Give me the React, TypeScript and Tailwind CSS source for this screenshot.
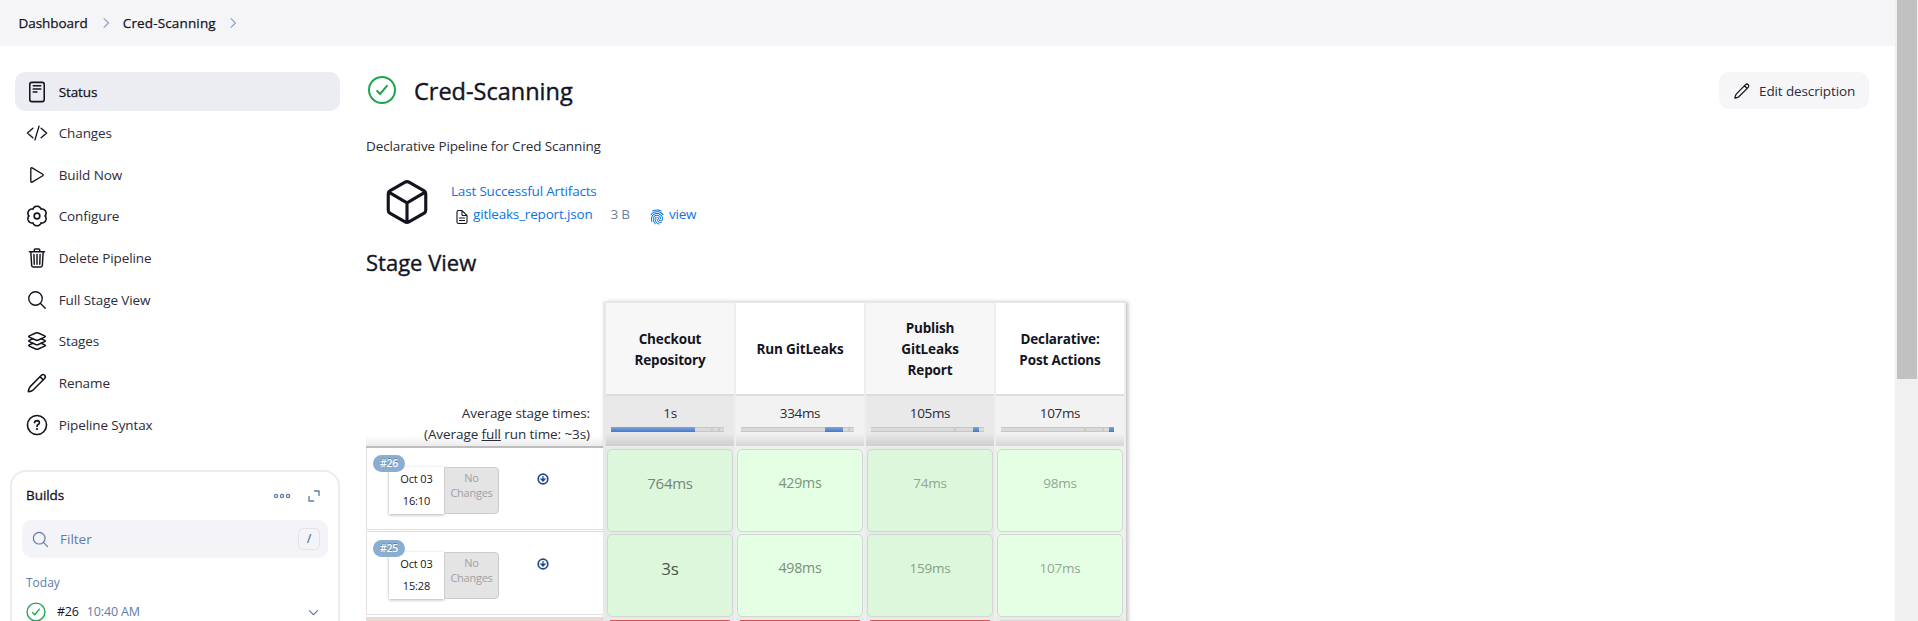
import React from "react";
import { IoFingerPrint } from "react-icons/io5";

const stroke = {
  fill: "none",
  stroke: "currentColor",
  strokeLinecap: "round" as const,
  strokeLinejoin: "round" as const,
};

type IconProps = { size?: number; className?: string };

function Icon({ size = 22, className = "", width = 32, children }: IconProps & { width?: number; children: React.ReactNode }) {
  return (
    <svg width={size} height={size} viewBox="0 0 512 512" className={"shrink-0 " + className} {...stroke} strokeWidth={width}>
      {children}
    </svg>
  );
}

const StatusIcon = () => (
  <Icon width={36}>
    <rect x="88" y="32" width="336" height="448" rx="48" />
    <path d="M168 112h176M168 184h176M168 256h88" />
  </Icon>
);
const CodeIcon = () => (
  <Icon>
    <path d="M160 368L32 256l128-112M352 368l128-112-128-112M304 96l-96 320" />
  </Icon>
);
const PlayIcon = () => (
  <Icon>
    <path d="M112 111v290c0 17.44 17 28.52 31 20.16l247.900-148.370c12.120-7.250 12.120-26.330 0-33.580L143 90.840c-14-8.360-31 2.720-31 20.160z" />
  </Icon>
);

// Six-lobed cog outline, sampled around the circle with a lobe pointing up.
const gearPoints = Array.from({ length: 120 }, (_, i) => {
  const a = (i / 120) * Math.PI * 2;
  const r = 186 + 42 * Math.pow(Math.abs(Math.cos(3 * a)), 0.8);
  return `${(256 + r * Math.sin(a)).toFixed(1)},${(256 - r * Math.cos(a)).toFixed(1)}`;
}).join(" ");

const GearIcon = () => (
  <Icon width={38}>
    <circle cx="256" cy="256" r="66" />
    <polygon points={gearPoints} />
  </Icon>
);
const TrashIcon = () => (
  <Icon width={34}>
    <path d="M112 112l20 320c.95 18.490 14.400 32 32 32h184c17.670 0 30.870-13.510 32-32l20-320M80 112h352M192 112V72a24 24 0 0124-24h80a24 24 0 0124 24v40M256 176v224M184 176l8 224M328 176l-8 224" />
  </Icon>
);
const SearchIcon = ({ size, className }: IconProps) => (
  <Icon size={size} className={className}>
    <circle cx="221" cy="221" r="157" />
    <path d="M338.290 338.290L448 448" />
  </Icon>
);
const LayersIcon = () => (
  <Icon width={36}>
    <path d="M434.800 137.650l-149.360-68.100c-16.190-7.400-42.690-7.400-58.880 0L77.300 137.650c-17.600 8-17.600 21.090 0 29.090l148 67.500c16.890 7.700 44.690 7.700 61.580 0l148-67.500c17.520-8 17.520-21.100-.08-29.090zM160 308.520l-82.700 37.110c-17.600 8-17.600 21.100 0 29.100l148 67.500c16.890 7.690 44.690 7.690 61.580 0l148-67.500c17.600-8 17.600-21.100 0-29.100l-79.940-38.470" />
    <path d="M160 204.480l-82.800 37.160c-17.600 8-17.600 21.100 0 29.100l148 67.490c16.890 7.700 44.690 7.700 61.580 0l148-67.490c17.700-8 17.700-21.100.1-29.100L352 204.480" />
  </Icon>
);
const PencilIcon = ({ size, className }: IconProps) => (
  <Icon size={size} className={className} width={36}>
    <path d="M54 458Q62 390 92 346L358 76Q396 40 432 76Q470 114 432 152L166 420Q122 450 54 458zM326 108l78 78" />
  </Icon>
);
const HelpIcon = () => (
  <Icon width={38}>
    <circle cx="256" cy="256" r="222" />
    <path d="M200 202Q204 154 258 154Q312 156 312 202Q312 230 282 246Q256 260 256 292" />
    <circle cx="256" cy="352" r="8" />
  </Icon>
);
const CheckIcon = ({ size, className }: IconProps) => (
  <Icon size={size} className={className}>
    <circle cx="256" cy="256" r="208" />
    <path d="M336 190L224 320l-46-50" />
  </Icon>
);
const Chevron = ({ size = 14, className }: IconProps) => (
  <Icon size={size} className={className} width={44}>
    <path d="M184 96l160 160-160 160" />
  </Icon>
);
const CubeIcon = () => (
  <Icon size={50} width={32}>
    <path d="M448 341.370V170.610A32 32 0 00432.110 143l-152-88.460a47.940 47.940 0 00-48.240 0L79.890 143A32 32 0 0064 170.610v170.760A32 32 0 0079.890 369l152 88.460a48 48 0 0048.240 0l152-88.460A32 32 0 00448 341.370zM69 153.990l187 110 187-110M256 463.990v-200" />
  </Icon>
);
const FileIcon = () => (
  <Icon size={16} width={36}>
    <path d="M416 221.250V416a48 48 0 01-48 48H144a48 48 0 01-48-48V96a48 48 0 0148-48h98.750a32 32 0 0122.620 9.370l141.260 141.260a32 32 0 019.370 22.620zM256 56v120a32 32 0 0032 32h120M176 288h160M176 368h160" />
  </Icon>
);

const navItems = [
  { label: "Status", icon: <StatusIcon />, active: true },
  { label: "Changes", icon: <CodeIcon /> },
  { label: "Build Now", icon: <PlayIcon /> },
  { label: "Configure", icon: <GearIcon /> },
  { label: "Delete Pipeline", icon: <TrashIcon /> },
  { label: "Full Stage View", icon: <SearchIcon /> },
  { label: "Stages", icon: <LayersIcon /> },
  { label: "Rename", icon: <PencilIcon /> },
  { label: "Pipeline Syntax", icon: <HelpIcon /> },
];

function Sidebar() {
  return (
    <aside className="w-[366px] shrink-0">
      <nav className="flex flex-col gap-[2.670px] pt-[26px] pl-[15px]">
        {navItems.map((n) => (
          <a
            key={n.label}
            className={
              "flex h-[39px] w-[325px] items-center gap-[10.700px] rounded-[10px] pl-[11px] text-[13.500px] tracking-[-0.100px] whitespace-nowrap " +
              (n.active ? "bg-[#ecedf3] pt-px [-webkit-text-stroke:0.25px]" : "")
            }
          >
            {n.icon}
            <span className={n.active ? "" : "text-[#2c2c37]"}>{n.label}</span>
          </a>
        ))}
      </nav>
      <section className="mt-[26px] ml-[10px] h-[300px] w-[330px] rounded-[16px] border-2 border-[#ebebf3]">
        <div className="flex h-[48px] items-center pr-[17px] pl-[14px]">
          <h2 className="flex-1 pb-[2px] text-[13.500px] tracking-[-0.050px] [-webkit-text-stroke:0.3px]">Builds</h2>
          <svg width="18" height="6" className="mr-[16px] text-[#5c7da8]" {...stroke} strokeWidth="1.300">
            <circle cx="3" cy="3" r="1.600" />
            <circle cx="9" cy="3" r="1.600" />
            <circle cx="15" cy="3" r="1.600" />
          </svg>
          <svg width="14" height="14" className="text-[#5c7da8]" {...stroke} strokeWidth="1.400">
            <path d="M7.500 2h4.500v4.500M6.500 12H2V7.500" />
          </svg>
        </div>
        <div className="mx-[10px] flex h-[38px] items-center rounded-[10px] bg-[#f3f3f8] pr-[8px] pl-[9px] text-[#5c7da8]">
          <SearchIcon size={19} />
          <span className="ml-[10px] flex-1 text-[13.500px]">Filter</span>
          <kbd className="flex h-[22px] w-[22px] items-center justify-center rounded-[5px] border border-[#e3e3ea] font-[inherit] text-[12px] font-semibold">/</kbd>
        </div>
        <div className="mt-[16px] pl-[14px] text-[12px] leading-[18px] text-[#5c7da8]">Today</div>
        <div className="mt-[8px] flex h-[24px] items-center pl-[13px] text-[13.500px]">
          <CheckIcon size={22} className="text-[#1ea64b]" />
          <span className="ml-[10px] pt-px text-[12.500px] tracking-[-0.200px]">#26</span>
          <span className="ml-[8px] flex-1 pt-px text-[12.500px] tracking-[-0.150px] text-[#5c7da8]">10:40 AM</span>
          <Chevron size={13} className="mr-[18px] rotate-90 text-[#5c7da8]" />
        </div>
      </section>
    </aside>
  );
}

type Stage = {
  name: string[];
  avg: string;
  bar: [number, number];
  ticks: number[];
  runs: [string, string];
  failed: boolean;
};

const stages: Stage[] = [
  { name: ["Checkout", "Repository"], avg: "1s", bar: [0, 84], ticks: [100, 107], runs: ["764ms", "3s"], failed: true },
  { name: ["Run GitLeaks"], avg: "334ms", bar: [84, 18], ticks: [107], runs: ["429ms", "498ms"], failed: true },
  { name: ["Publish", "GitLeaks", "Report"], avg: "105ms", bar: [102, 6], ticks: [83], runs: ["74ms", "159ms"], failed: true },
  { name: ["Declarative:", "Post Actions"], avg: "107ms", bar: [108, 5], ticks: [83, 101], runs: ["98ms", "107ms"], failed: false },
];

const runTone: Record<string, string> = {
  "764ms": "text-[15px] text-[#72867a]",
  "3s": "mt-px text-[17px] text-[#4a564f]",
  "429ms": "text-[14.200px] text-[#7f917f]",
  "498ms": "text-[14.200px] text-[#7c8e7c]",
  "74ms": "text-[13.500px] text-[#8fa690]",
  "159ms": "text-[13.500px] text-[#889f89]",
  "98ms": "text-[13.500px] text-[#90a891]",
  "107ms": "text-[13.500px] text-[#90a891]",
};

function StageColumn({ stage, odd }: { stage: Stage; odd: boolean }) {
  return (
    <div className="flex w-[130px] flex-col border-r-2 border-[#eeeeef]">
      <div className={"flex h-[91px] flex-col items-center justify-center pt-[2px] text-[13.500px] leading-[21px] font-bold tracking-[-0.150px] " + (odd ? "bg-[#f7f7f7]" : "bg-white")}>
        {stage.name.map((l) => (
          <span key={l}>{l}</span>
        ))}
      </div>
      <div className={"flex h-[52px] flex-col items-center border-t-2 border-[#dddddd] bg-linear-to-b " + (odd ? "from-[#e9e9e9] from-75% to-[#cecece]" : "from-[#f2f2f2] from-75% to-[#d6d6d6]")}>
        <span className="mt-[7px] text-[13.500px] leading-[21px] tracking-[-0.350px] text-[#2c2c37]">{stage.avg}</span>
        <div className="relative mt-[3px] mr-[5px] h-[5px] w-[113px] border-y border-[#c6c6c6] bg-[#dadada]">
          {stage.ticks.map((t) => (
            <i key={t} className="absolute inset-y-0 w-[2px] bg-[#cacaca]" style={{ left: t }} />
          ))}
          <i className="absolute -inset-y-px bg-linear-to-b from-[#7fa6dc] to-[#4577cc]" style={{ left: stage.bar[0], width: stage.bar[1] }} />
        </div>
      </div>
      <div className="h-px bg-[#eeeeef]" />
      {stage.runs.map((r) => (
        <div key={r} className={"h-[85px] px-px pt-[2px] " + (odd ? "bg-[#e3ede3]" : "bg-[#eaf5ea]")}>
          <div className={"flex h-[83px] justify-center rounded-[5px] border border-[#d3d5d5] pt-[21px] leading-[24px] tracking-[-0.250px] " + (odd ? "bg-[#ddf7dc]" : "bg-[#e4ffe3]")}>
            <span className={runTone[r]}>{r}</span>
          </div>
        </div>
      ))}
      <div className="flex-1 bg-[#e9e9e9] px-[4px] pt-[3px]">
        <div className={"h-[2px] " + (stage.failed ? "bg-[#d9534f]" : "bg-[#d5d9d5]")} />
      </div>
    </div>
  );
}

function BuildRow({ id, time }: { id: string; time: string }) {
  return (
    <div className="relative h-[82px] border-b border-l border-[#e0e0e0] bg-white">
      <div className="flex pt-[19px] pl-[22px]">
        <div className="flex h-[47px] w-[55px] flex-col items-center bg-white pt-px text-[11px] leading-[22px] tracking-[-0.150px] shadow-[0_1px_3px_rgba(0,0,0,0.3)]">
          <span>Oct 03</span>
          <span>{time}</span>
        </div>
        <div className="flex h-[47px] w-[55px] flex-col items-center rounded-r-[4px] border border-[#cccccc] bg-[#e4e4e4] pt-[2px] text-[11px] leading-[15px] tracking-[-0.250px] text-[#a0a0a0]">
          <span>No</span>
          <span>Changes</span>
        </div>
        <svg width="12" height="12" viewBox="0 0 12 12" className="mt-[6px] ml-[38px]">
          <circle cx="6" cy="6" r="4.800" fill="white" stroke="#204a87" strokeWidth="1.700" />
          <path d="M6 3v5M4 6l2 2.200L8 6z" fill="#204a87" stroke="#204a87" strokeWidth="1.200" />
        </svg>
      </div>
      <span className="absolute top-[7px] left-[6px] flex h-[17px] w-[32px] items-center justify-center rounded-full bg-[#8aadd2] pt-px text-[10.500px] font-semibold tracking-[-0.300px] text-white [text-shadow:0_-1px_0_rgba(0,0,0,0.25)]">{id}</span>
    </div>
  );
}

function StageView() {
  return (
    <div className="flex h-[330px]">
      <div className="mt-[92px] flex w-[237px] flex-col">
        <div className="flex h-[54px] flex-col items-end border-b-2 border-[#bdbdbd] bg-linear-to-b from-white from-80% to-[#ececec] pt-[9px] pr-[13px] text-[13.500px] leading-[21px] tracking-[-0.080px] text-[#2c2c37]">
          <span>Average stage times:</span>
          <span>
            (Average <u>full</u> run time: ~3s)
          </span>
        </div>
        <BuildRow id="#26" time="16:10" />
        <div className="mt-px h-[2px] border-t border-l border-[#e0e0e0]" />
        <BuildRow id="#25" time="15:28" />
        <div className="mt-[2px] flex-1 bg-[#eed9d5]" />
      </div>
      <div className="flex border-t border-l-[3px] border-[#e8e8ea] shadow-[2px_0_4px_rgba(0,0,0,0.25)]">
        {stages.map((s, i) => (
          <StageColumn key={s.name[0]} stage={s} odd={i % 2 === 0} />
        ))}
      </div>
    </div>
  );
}

export default function App() {
  return (
    <div className="flex h-[621px] w-[1918px] overflow-hidden bg-white font-['Open_Sans','Noto_Sans',sans-serif] text-[#14141f]">
      <div className="flex min-w-0 flex-1 flex-col">
        <header className="flex h-[46px] shrink-0 items-center bg-[#f5f5f8] pl-[18.500px] text-[13.500px] [-webkit-text-stroke:0.25px]">
          <span className="tracking-[-0.050px]">Dashboard</span>
          <Chevron className="mr-[10px] ml-[11px] text-[#8ba3c7]" />
          <span className="tracking-[0.150px]">Cred-Scanning</span>
          <Chevron className="mx-[10px] text-[#8ba3c7]" />
        </header>
        <div className="flex min-h-0 flex-1">
          <Sidebar />
          <main className="min-w-0 flex-1 pt-[26px] pr-[26px]">
            <div className="flex h-[37px] items-center">
              <CheckIcon size={32} className="-mt-px text-[#1ea64b]" />
              <h1 className="ml-[16px] flex-1 pt-[2px] text-[23.500px] [-webkit-text-stroke:0.4px]">Cred-Scanning</h1>
              <button className="flex h-[37px] w-[150px] items-center rounded-[10px] bg-[#f6f6f9] pl-[14px] text-[13.500px] tracking-[-0.120px] whitespace-nowrap">
                <PencilIcon size={18} />
                <span className="ml-[8px] pt-px text-[#2c2c37]">Edit description</span>
              </button>
            </div>
            <p className="mt-[27px] text-[13.500px] leading-[21px] tracking-[-0.120px] text-[#2c2c37]">Declarative Pipeline for Cred Scanning</p>
            <div className="mt-[20px] flex h-[52px] text-[13.500px] tracking-[-0.180px] text-[#0b74e5]">
              <div className="ml-[16px] w-[69px] text-[#14141f]">
                <CubeIcon />
              </div>
              <div className="pt-[3px]">
                <div className="leading-[23px]">Last Successful Artifacts</div>
                <div className="flex items-center leading-[23px]">
                  <span className="mt-[4px] ml-[3px] text-[#14141f]">
                    <FileIcon />
                  </span>
                  <span className="ml-[3px]">gitleaks_report.json</span>
                  <span className="ml-[18px] text-[#6b7fa3]">3 B</span>
                  <IoFingerPrint size={16} className="mt-[4px] ml-[19px]" />
                  <span className="ml-[4px]">view</span>
                </div>
              </div>
            </div>
            <h2 className="mt-[14px] mb-[21px] text-[22px] leading-[38px] [-webkit-text-stroke:0.35px]">Stage View</h2>
            <StageView />
          </main>
        </div>
      </div>
      <div className="flex w-[23px] shrink-0 bg-[#f0f0f0] pl-[2px]">
        <div className="h-[379px] w-[20px] bg-[#c1c1c1]" />
      </div>
    </div>
  );
}
